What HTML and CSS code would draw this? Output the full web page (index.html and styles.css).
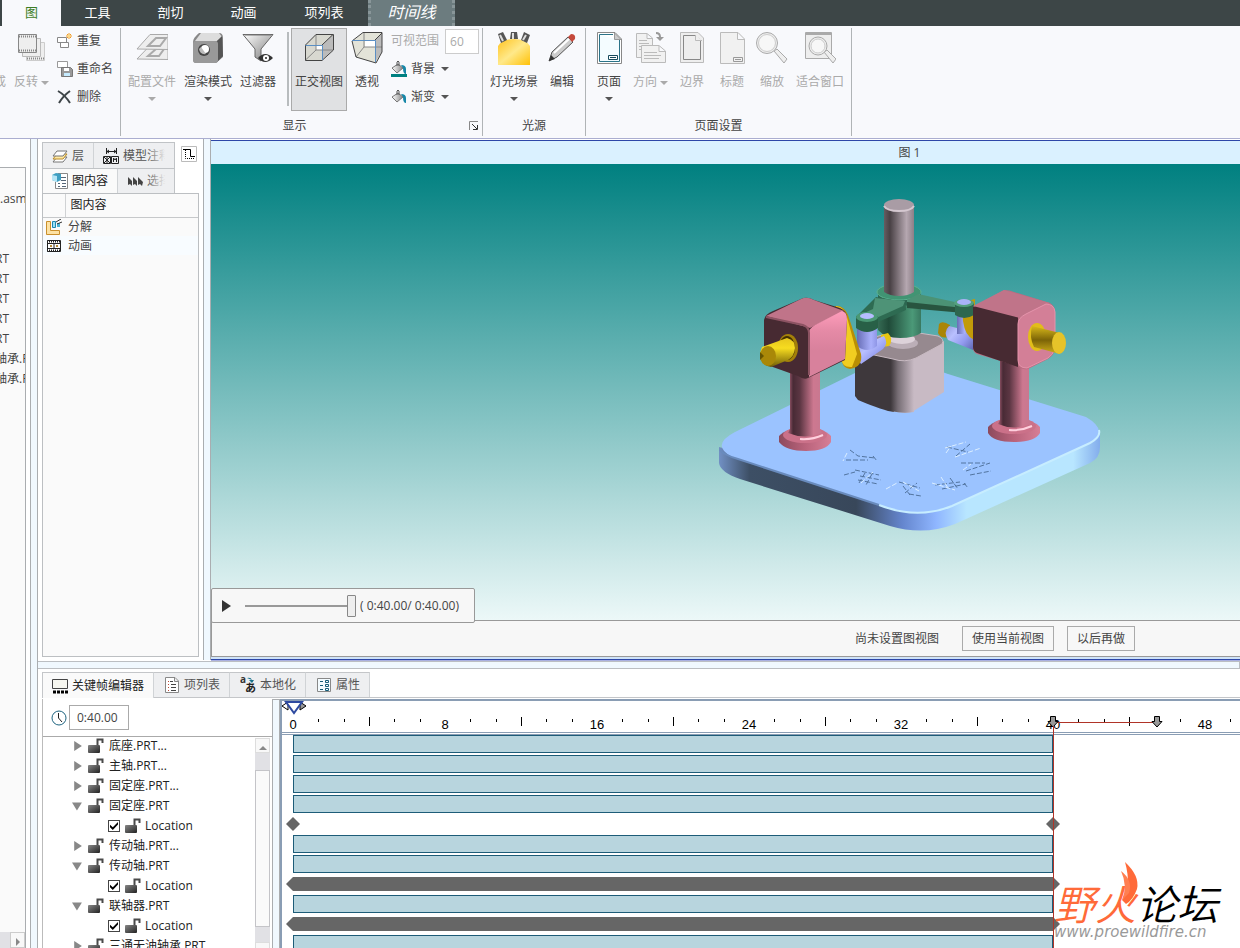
FILE: index.html
```html
<!DOCTYPE html>
<html lang="zh-CN">
<head>
    <meta charset="UTF-8">
    <meta name="viewport" content="width=device-width, initial-scale=1.0">
    <title>图 1</title>
    <link rel="stylesheet" href="styles.css">
</head>
<body>
    <!-- 公用图标 -->
    <svg class="defs" width="0" height="0">
        <defs>
            <linearGradient id="metal" x1="0" y1="0" x2="1" y2="1">
                <stop offset="0" stop-color="#fff"/><stop offset="1" stop-color="#777"/>
            </linearGradient>
            <linearGradient id="lockFill" x1="0" y1="0" x2="1" y2="1">
                <stop offset="0" stop-color="#888"/><stop offset="1" stop-color="#222"/>
            </linearGradient>
            <linearGradient id="bucket" x1="0" y1="0" x2="1" y2="0">
                <stop offset="0" stop-color="#fff"/><stop offset="1" stop-color="#888"/>
            </linearGradient>
            <symbol id="lock" viewBox="0 0 16 16">
                <path d="M9.500 8V1.500H14.500V5" fill="none" stroke="#4a4a4a" stroke-width="2"/>
                <rect x="0" y="7" width="12" height="8" rx="1" fill="url(#lockFill)"/>
            </symbol>
            <symbol id="bucketIcon" viewBox="0 0 16 16">
                <path d="M1 8L7 4L12 8L6 13Z" fill="url(#bucket)" stroke="#777"/>
                <path d="M6 6V2Q7 0 8 2V6" fill="none" stroke="#555"/>
                <path d="M10 5Q15 5 15 9V14Q12 14 12 8Z" fill="#1687a8"/>
            </symbol>
            <symbol id="ticks" viewBox="0 0 152 10">
                <path d="M25.500 2V5M51.500 2V5M101.500 2V5M127.500 2V5M76.500 0V9" stroke="#000" fill="none"/>
            </symbol>
            <symbol id="handle" viewBox="0 0 12 12">
                <path d="M3.500 .5H8.500V5.500H11L6 11L1 5.500H3.500Z" fill="#999" stroke="#000"/>
            </symbol>
        </defs>
    </svg>

    <nav class="menu">
        <a href="#" class="active">图</a>
        <a href="#">工具</a>
        <a href="#">剖切</a>
        <a href="#">动画</a>
        <a href="#" class="wide">项列表</a>
        <a href="#" class="context">时间线</a>
    </nav>

    <header class="ribbon">
        <section class="group group-edit">
            <div class="tools">
                <button class="tool disabled">
                    <svg width="24" height="32"></svg>
                    <span>生成</span>
                </button>
                <button class="tool disabled">
                    <svg width="32" height="32" viewBox="0 0 32 32" fill="#eee" stroke="#aaa">
                        <path d="M11.500 10.500H29.500V28.500H11.500Z" stroke="#ccc"/><path d="M7.500 6.500H25.500V24.500H7.500Z" stroke="#bbb"/>
                        <path d="M3.500 2.500H21.500V20.500H3.500Z" stroke="#888"/>
                        <path d="M4 4.500H21M4 18.500H21M12 26.500H29" stroke="#888" stroke-width="2" stroke-dasharray="1 1"/>
                    </svg>
                    <span>反转<i class="caret"></i></span>
                </button>
                <div class="stack">
                    <button class="small">
                        <svg width="16" height="16" viewBox="0 0 16 16">
                            <path d="M.5 4.500H9.500V9.500H.5ZM3.500 9.500H11.500V14.500H3.500Z" fill="#fff" stroke="#888"/>
                            <path d="M12 0V6M9 3H15M10 1L14 5M14 1L10 5" stroke="#f29a1f"/><circle cx="12" cy="3" r="1" fill="#fff2a0"/>
                        </svg>重复
                    </button>
                    <button class="small">
                        <svg width="16" height="16" viewBox="0 0 16 16">
                            <path d="M.5 .5H10.500V6.500H.5Z" fill="#fff" stroke="#999"/>
                            <path d="M4.500 6.500H13.500L15.500 8.500V15.500H4.500Z" fill="#999" stroke="#777"/>
                            <path d="M7 7H12V10H7Z" fill="#fff"/><path d="M7 12H13V15H7Z" fill="#c5ebff"/>
                        </svg>重命名
                    </button>
                    <button class="small">
                        <svg width="16" height="16" viewBox="0 0 16 16">
                            <path d="M1 2Q8 6 13 14M13 2Q6 7 2 14" fill="none" stroke="#3e4548" stroke-width="2"/>
                        </svg>删除
                    </button>
                </div>
            </div>
        </section>

        <section class="group">
            <div class="tools">
                <button class="tool disabled">
                    <svg width="32" height="32" viewBox="0 0 32 32" fill="#eee" stroke="#aaa">
                        <path d="M1 27L14 13.500H32V27.500Z"/><path d="M12 24L20 17H28L23 24Z" fill="none" stroke-width="2"/>
                        <path d="M1 17L14 2.500H32V17.500Z"/><path d="M12 14L20 6H30L24 14Z" fill="none" stroke-width="2"/>
                    </svg>
                    <span>配置文件</span><i class="caret"></i>
                </button>
                <button class="tool">
                    <svg width="32" height="32" viewBox="0 0 32 32">
                        <path d="M1 10Q1 6 7 1H27Q31 1 31 6V25L24 31H4Q1 31 1 27Z" fill="#888"/>
                        <path d="M3 9L9 1H27L30 5L25 9Z" fill="#ddd"/><path d="M25 9L30 4L31 24L25 30Z" fill="#555"/>
                        <rect x="1" y="9" width="25" height="22" rx="3" fill="#999"/>
                        <circle cx="12" cy="18" r="6" fill="#444"/><circle cx="13" cy="17" r="4" fill="#fff"/><path d="M7 17Q8 23 14 22L9 15Z" fill="#bbb"/>
                    </svg>
                    <span>渲染模式</span><i class="caret"></i>
                </button>
                <button class="tool">
                    <svg width="32" height="32" viewBox="0 0 32 32">
                        <path d="M1 2.500H31L19 17V29L13 25V17Z" fill="url(#metal)" stroke="#666"/><path d="M3 3H29" stroke="#777"/>
                        <path d="M16 26Q23 18 31 26Q23 34 16 26Z" fill="#333"/><circle cx="24" cy="26" r="3" fill="#fff"/><circle cx="24" cy="26" r="1" fill="#222"/>
                    </svg>
                    <span>过滤器</span>
                </button>
                <div class="divider"></div>
                <button class="tool pressed">
                    <svg width="32" height="32" viewBox="0 0 32 32">
                        <path d="M2 13L13 2H30V18L19 28H2Z" fill="#d8d8d0"/><path d="M19 13L30 2V18L19 28Z" fill="#bbb"/><path d="M13 13H19V18H13Z" fill="#fff"/>
                        <path d="M13 2.500V18H30M13 18L2.500 28" fill="none" stroke="#888"/>
                        <path d="M2.500 13V28.500H19L30.500 18V2.500H13L2.500 13M19 13L30 2.500" fill="none" stroke="#444"/>
                        <path d="M2.500 13.500H19.500V28" fill="none" stroke="#5b8fc4"/>
                    </svg>
                    <span>正交视图</span>
                </button>
                <button class="tool">
                    <svg width="32" height="32" viewBox="0 0 32 32">
                        <path d="M1 9L12 1H31V20L25 31L5 25Z" fill="#e3e3d8"/><path d="M24 8L31 1V20L24 30Z" fill="#bbb"/><path d="M14 8H24V15H14Z" fill="#fff"/>
                        <path d="M13 1V15H31M13 15L5 25" fill="none" stroke="#888"/>
                        <path d="M1 9L12 .5H31V20L25 31L5 25ZM24 8L31 1" fill="none" stroke="#444"/>
                        <path d="M1 8.500H24.500V30" fill="none" stroke="#5b8fc4"/>
                    </svg>
                    <span>透视</span>
                </button>
                <div class="stack">
                    <div class="field">
                        <label for="fov">可视范围</label>
                        <input type="text" id="fov" value="60" disabled>
                    </div>
                    <button class="small">
                        <svg width="16" height="16" viewBox="0 0 16 16"><use href="#bucketIcon" y="-1"/><path d="M0 13H16V16H0Z" fill="#008080"/></svg>背景<i class="caret"></i>
                    </button>
                    <button class="small">
                        <svg width="16" height="16"><use href="#bucketIcon"/></svg>渐变<i class="caret"></i>
                    </button>
                </div>
            </div>
            <div class="group-name with-launcher">显示
                <button class="launcher" aria-label="显示选项">
                    <svg width="10" height="10" viewBox="0 0 10 10"><path d="M.5 9V.5H9" fill="none" stroke="#888"/><path d="M3 3L8 8M8.500 4V8.500H4" fill="none" stroke="#333"/></svg>
                </button>
            </div>
        </section>

        <section class="group">
            <div class="tools">
                <button class="tool">
                    <svg width="34" height="34" viewBox="0 0 34 34">
                        <defs><linearGradient id="lamp" x1="0" y1="0" x2="1" y2="1"><stop offset="0" stop-color="#ffc320"/><stop offset=".5" stop-color="#ffe98a"/><stop offset="1" stop-color="#ffc107"/></linearGradient></defs>
                        <path d="M1 34V15Q5 8 17 8T33 15V34Z" fill="url(#lamp)"/>
                        <path d="M1 3L6 1L10 9L4 12ZM14 1H20L21 8H13ZM27 1L33 4L30 12L24 9Z" fill="#555"/>
                        <path d="M3 4L6 10M16 2V8M29 4L26 9" stroke="#ddd" stroke-width="2"/>
                    </svg>
                    <span>灯光场景</span><i class="caret"></i>
                </button>
                <button class="tool">
                    <svg width="32" height="32" viewBox="0 0 32 32">
                        <path d="M3 29L6 20L22 5L27 10L11 25Z" fill="#ccc" stroke="#555"/><path d="M8 21L23 7" stroke="#fff" stroke-width="2"/>
                        <path d="M3 29L5 23L9 27Z" fill="#333"/><path d="M22 5L25 2Q30 2 29 7L26 10Z" fill="#c5493b"/>
                    </svg>
                    <span>编辑</span>
                </button>
            </div>
            <div class="group-name">光源</div>
        </section>

        <section class="group">
            <div class="tools">
                <button class="tool">
                    <svg width="32" height="32" viewBox="0 0 32 32">
                        <path d="M4.500 .5H22L28.500 7V31.500H4.500Z" fill="#fff" stroke="#888"/><path d="M6.500 2.500H20M26.500 8V29.500H6.500V2.500" fill="#f4fcff" stroke="#2b7388"/>
                        <path d="M21.500 1V7.500H28Z" fill="#ccc" stroke="#999"/><path d="M15.500 23.500H24.500V27.500H15.500ZM17 25.500H23" fill="#fff" stroke="#174b5d"/>
                    </svg>
                    <span>页面</span><i class="caret"></i>
                </button>
                <button class="tool disabled">
                    <svg width="32" height="32" viewBox="0 0 32 32" fill="#f1f1f1" stroke="#bbb">
                        <path d="M1.500 1.500H12L17.500 6V25.500H1.500ZM12 2V6.500H17M4 8.500H12M4 11.500H14M4 14.500H12M4 17.500H8"/>
                        <path d="M6.500 13.500H24L30.500 19V30.500H6.500ZM24 14V19.500H30M9 20.500H22M9 23.500H26M9 26.500H24"/>
                        <path d="M21 1Q25 1 25 5" fill="none" stroke="#999" stroke-width="2"/><path d="M21 5H29L25 9Z" fill="#999" stroke="none"/>
                    </svg>
                    <span>方向<i class="caret"></i></span>
                </button>
                <button class="tool disabled">
                    <svg width="32" height="32" viewBox="0 0 32 32" fill="#eee" stroke="#bbb">
                        <path d="M4.500 .5H22L27.500 6V30.500H4.500Z"/><path d="M7.500 3.500H19L24.500 8V27.500H7.500Z" stroke="#888"/><path d="M19.500 3V8.500H26"/>
                    </svg>
                    <span>边界</span>
                </button>
                <button class="tool disabled">
                    <svg width="32" height="32" viewBox="0 0 32 32" fill="#f1f1f1" stroke="#bbb">
                        <path d="M4.500 .5H22L28.500 7V31.500H4.500ZM21.500 1V7.500H28"/><path d="M17.500 25.500H26.500V29.500H17.500ZM19 27.500H25" stroke="#999"/>
                    </svg>
                    <span>标题</span>
                </button>
                <button class="tool disabled">
                    <svg width="32" height="32" viewBox="0 0 32 32" fill="#eee" stroke="#aaa">
                        <path d="M18 19L21 17L31 27L28 31Z"/><circle cx="11" cy="11" r="10.500"/><circle cx="11" cy="11" r="8.500" fill="#f7f7f7" stroke="#ccc"/>
                    </svg>
                    <span>缩放</span>
                </button>
                <button class="tool disabled">
                    <svg width="32" height="32" viewBox="0 0 32 32" fill="#eee" stroke="#aaa">
                        <path d="M1.500 .5H27.500V26.500H1.500Z"/><path d="M1 2H28" stroke-width="2"/><path d="M20 20L23 18L32 27L29 31Z"/><circle cx="14" cy="14" r="9"/><circle cx="14" cy="14" r="7" fill="#f7f7f7" stroke="#ccc"/>
                    </svg>
                    <span>适合窗口</span>
                </button>
            </div>
            <div class="group-name">页面设置</div>
        </section>
    </header>

    <div class="workspace">
        <aside class="model-tree">
            <div class="model-box">
                <ul>
                    <li class="root">.asm</li>
                    <li></li>
                    <li></li>
                    <li>RT</li>
                    <li>RT</li>
                    <li>RT</li>
                    <li>RT</li>
                    <li>RT</li>
                    <li>轴承.PRT</li>
                    <li>轴承.PRT</li>
                </ul>
                <div class="hscroll"><button aria-label="向右"><i class="arrow-right"></i></button></div>
            </div>
        </aside>
        <div class="splitter-v"></div>

        <main class="main">
            <div class="upper">
                <aside class="figure-tree">
                    <div class="tree-head">
                        <div class="tree-tabs">
                            <div class="tab-row">
                                <button class="tab tab-layer">
                                    <svg width="16" height="16" viewBox="0 0 16 16"><path d="M1 14L5 9H15L11 14Z" fill="#fff" stroke="#777"/><path d="M1 11L5 6H15L11 11Z" fill="#ffe9a3" stroke="#b98a28"/><path d="M1 8L5 3H15L11 8Z" fill="#fff" stroke="#777"/></svg>层
                                </button>
                                <button class="tab fade">
                                    <svg width="16" height="16" viewBox="0 0 16 16"><path d="M3.500 0V6M13.500 0V6M4 3.500H13M6 2L4 3.500L6 5M11 2L13 3.500L11 5" fill="none" stroke="#222"/><path d="M.5 8.500H7.500V15.500H.5ZM8.500 8.500H15.500V15.500H8.500ZM1 9L7 15M7 9L1 15M4 9V15M10.500 14V10L12 12L13.500 10V14" fill="none" stroke="#222"/></svg>模型注释
                                </button>
                            </div>
                            <div class="tab-row">
                                <button class="tab tab-figure active">
                                    <svg width="16" height="16" viewBox="0 0 16 16"><path d="M5.500 .5H15.500V15.500H3.500V9" fill="#fff" stroke="#888"/><path d="M9 4.500H14M9 7.500H14M6 10.500H8M10 10.500H14M6 13.500H8M10 13.500H14" stroke="#567"/><path d="M0 2L4 0L9 1V7L5 9L0 7Z" fill="#3f9fc2"/><path d="M0 2L5 3V9L0 7Z" fill="#b6e5f5"/></svg>图内容
                                </button>
                                <button class="tab fade">
                                    <svg width="16" height="16" viewBox="0 0 16 16"><path d="M1 4L5 8V13L3 11L1 12ZM6 4L10 8V13L8 11L6 12ZM11 4L16 9L15 13L13 11L11 12Z" fill="#444"/></svg>选择
                                </button>
                            </div>
                        </div>
                        <button class="tree-menu" aria-label="树设置">
                            <svg width="16" height="16" viewBox="0 0 16 16"><path d="M.5 .5H15.500V15.500H.5Z" fill="#fff" stroke="#bbb"/><path d="M2 3.500H9.500V10.500H14" fill="none" stroke="#000"/><path d="M4.500 4V12.500H14" fill="none" stroke="#000" stroke-dasharray="1 1"/></svg>
                        </button>
                    </div>
                    <div class="figure-box">
                        <table>
                            <thead>
                                <tr><th></th><th>图内容</th></tr>
                            </thead>
                            <tbody>
                                <tr>
                                    <td><svg width="16" height="16" viewBox="0 0 16 16"><path d="M.5 2.500H4.500V11.500H13.500V15.500H.5Z" fill="#fde2a4" stroke="#c98f2c"/><path d="M6.500 2.500H9.500V8.500H6.500Z" fill="#9be0f5" stroke="#1d87b0"/><path d="M11 4H14V8H11Z" fill="#48b2d4"/><path d="M10 3L15 0M11 5L16 3" stroke="#333"/></svg></td>
                                    <td>分解</td>
                                </tr>
                                <tr class="current">
                                    <td><svg width="16" height="16" viewBox="0 0 16 16"><path d="M1.500 2.500H14.500V13.500H1.500Z" fill="#fff" stroke="#222"/><path d="M1 3.500H15M1 12.500H15" stroke="#222" stroke-width="2" stroke-dasharray="1 1"/><path d="M2 5.500H14M2 10.500H14M8 5V11" stroke="#222"/><path d="M4 7H6V9H4ZM10 7H12V9H10Z" fill="#b58a35"/></svg></td>
                                    <td>动画</td>
                                </tr>
                            </tbody>
                        </table>
                    </div>
                </aside>
                <div class="splitter-v"></div>

                <section class="viewer">
                    <h1>图 1</h1>
                    <div class="canvas">
                        <svg class="model" width="400" height="360" viewBox="710 190 400 360">
                            <defs>
                                <linearGradient id="side" gradientUnits="userSpaceOnUse" x1="719" y1="0" x2="1100" y2="0">
                                    <stop offset="0" stop-color="#7190c4"/><stop offset=".08" stop-color="#3d4f65"/><stop offset=".36" stop-color="#38475a"/><stop offset=".48" stop-color="#6485cd"/><stop offset=".57" stop-color="#8fb6ff"/><stop offset=".65" stop-color="#b8e6ff"/><stop offset=".93" stop-color="#b8e6ff"/><stop offset="1" stop-color="#83adec"/>
                                </linearGradient>
                                <linearGradient id="pink"><stop offset="0" stop-color="#ae637a"/><stop offset=".15" stop-color="#482a35"/><stop offset=".35" stop-color="#5c3643"/><stop offset=".75" stop-color="#cd7890"/><stop offset="1" stop-color="#c77890"/></linearGradient>
                                <linearGradient id="flange"><stop offset="0" stop-color="#8d4a5d"/><stop offset=".5" stop-color="#b9637b"/><stop offset="1" stop-color="#d67e96"/></linearGradient>
                                <linearGradient id="grey"><stop offset="0" stop-color="#665d61"/><stop offset=".2" stop-color="#494145"/><stop offset=".75" stop-color="#b5a7b0"/><stop offset="1" stop-color="#8c7f87"/></linearGradient>
                                <linearGradient id="green"><stop offset="0" stop-color="#356a53"/><stop offset=".25" stop-color="#204b39"/><stop offset=".8" stop-color="#4b9978"/><stop offset="1" stop-color="#397860"/></linearGradient>
                                <linearGradient id="violet" x1="0" y1="0" x2="1" y2="1"><stop offset="0" stop-color="#8288cc"/><stop offset=".4" stop-color="#b9c0ff"/><stop offset=".7" stop-color="#929aef"/><stop offset="1" stop-color="#6068b2"/></linearGradient>
                                <linearGradient id="violetPost"><stop offset="0" stop-color="#676db5"/><stop offset=".7" stop-color="#a9b0fb"/><stop offset="1" stop-color="#8f96e6"/></linearGradient>
                                <linearGradient id="yellow" x1="0" y1="0" x2="0" y2="1"><stop offset="0" stop-color="#e6c51d"/><stop offset=".35" stop-color="#f7dc20"/><stop offset="1" stop-color="#715e06"/></linearGradient>
                                <linearGradient id="yellowDark" x1="0" y1="0" x2="0" y2="1"><stop offset="0" stop-color="#d9b91a"/><stop offset=".5" stop-color="#7c6407"/><stop offset="1" stop-color="#d2b01a"/></linearGradient>
                                <linearGradient id="corner" gradientUnits="userSpaceOnUse" x1="891" y1="0" x2="914" y2="0"><stop offset="0" stop-color="#403a3e"/><stop offset=".3" stop-color="#766d74"/><stop offset="1" stop-color="#c8bac4"/></linearGradient>
                                <linearGradient id="pinkFace" x1="0" y1="0" x2="0" y2="1"><stop offset="0" stop-color="#ff9dbb"/><stop offset=".3" stop-color="#e58aa6"/><stop offset=".6" stop-color="#d8819c"/></linearGradient>
                            </defs>
                            <!-- 底座 -->
                            <path d="M719 447V463Q720 472 740 479L890 526Q924 536 955 524L1090 463Q1100 458 1100 447V431L918 500Z" fill="url(#side)"/>
                            <path d="M735 432Q710 445 732 457L879 505Q917 520 952 506L1090 443Q1110 431 1086 417L948 374Q900 355 855 373Z" fill="#9bc3ff"/>
                            <path d="M879 505Q917 520 952 506L1090 443Q1101 437 1099 430" fill="none" stroke="#c7edff" stroke-width="2"/>
                            <path d="M720 450Q724 455 738 459L879 505" fill="none" stroke="#698bbd" stroke-width="2"/>
                            <g fill="none" stroke="#52749f" stroke-dasharray="5 2">
                                <path d="M850 450L858 456L875 458M846 460H868M873 456L877 461M844 475L855 472M858 480L878 484M860 476L881 480M865 473L859 483M872 474L866 485M855 470L879 475M899 482L920 488M905 493L917 483M903 486L910 495M909 494L921 496"/>
                                <path d="M935 485L960 482M942 489L966 484M950 478L958 489M964 483L968 488M947 447L968 452M956 456L970 444M961 463H985M966 471L990 463M970 475L991 471"/>
                            </g>
                            <g fill="none" stroke="#dcefff" stroke-dasharray="5 2">
                                <path d="M847 453L843 461M861 483L873 472M886 489L897 483M903 482L919 491M932 483L955 490M941 477L948 488M945 448L966 442M946 453L951 446M955 457L981 448M963 470L971 464"/>
                            </g>
                            <!-- 中间基座和主轴 -->
                            <path d="M855 349L894 358V412Q884 411 858 400L855 396Z" fill="#3e383c"/>
                            <path d="M911 358L944 341V392L912 412Q903 414 892 411V356Z" fill="#c8bac4"/>
                            <path d="M891 356H914V412Q903 414 891 411Z" fill="url(#corner)"/>
                            <path d="M856 349Q858 343 868 339L900 330L938 336Q945 339 942 344L916 358Q905 363 893 359L860 352Z" fill="#96898f" stroke="#c8bac2"/>
                            <ellipse cx="903" cy="343" rx="15" ry="6" fill="#bbaeb7"/><ellipse cx="902" cy="339" rx="13" ry="5" fill="#ddd2da"/>
                            <path d="M878 294H921V333Q914 338 900 338Q885 338 878 330Z" fill="url(#green)"/>
                            <path d="M878 292H921V298Q916 306 900 306T878 298Z" fill="#2c6650"/>
                            <ellipse cx="899" cy="292" rx="22" ry="8" fill="#419473" stroke="#5bb391"/>
                            <path d="M884 205H914V292Q908 296 899 296T884 292Z" fill="url(#grey)"/>
                            <ellipse cx="899" cy="205" rx="15" ry="6" fill="#a99ca5"/><path d="M884 206Q887 211 899 211T914 206" fill="none" stroke="#d5c8d0" stroke-width="2"/>
                            <path d="M918 294L964 304V312L907 305V300Z" fill="#4b9275"/><path d="M907 302L964 308V313L907 308Z" fill="#28543f"/>
                            <!-- 右侧连接 -->
                            <path d="M939 324Q942 320 950 325L948 337Q941 339 938 333Z" fill="#aa8507"/>
                            <path d="M949 326L957 328V318H968V332L973 334V350L948 340Q943 332 949 326Z" fill="url(#violet)"/><path d="M957 315H968V334H957Z" fill="url(#violetPost)"/>
                            <path d="M975 299Q961 301 963 321Q965 336 974 340Z" fill="#c29b09"/>
                            <path d="M955 303H974V315Q964 321 955 315Z" fill="#2d674f"/><ellipse cx="964" cy="303" rx="10" ry="4" fill="#54a17f"/><ellipse cx="964" cy="302" rx="7" ry="3" fill="#a8b3fa"/>
                            <!-- 左侧连接 -->
                            <path d="M881 335L888 333Q894 339 889 346L882 347Z" fill="#e7c612"/>
                            <path d="M857 341L877 339L884 336Q889 343 883 349L861 364Q853 354 857 341Z" fill="url(#violet)"/><path d="M857 327H877V346Q867 354 857 346Z" fill="url(#violetPost)"/>
                            <path d="M876 297L904 302Q906 305 906 310L878 322L858 325V315Z" fill="#2e6b52"/><path d="M875 298L905 301L903 306L874 319L860 315L873 309Z" fill="#4e9377"/>
                            <path d="M856 316H878V328Q867 336 856 328Z" fill="#286047"/><ellipse cx="867" cy="317" rx="11" ry="5" fill="#4a9875"/><ellipse cx="867" cy="316" rx="7" ry="3" fill="#b5bdff"/>
                            <!-- 固定座 -->
                            <g>
                                <path d="M779 436Q786 428 805 428T831 436V442Q826 451 806 451T779 442Z" fill="url(#flange)"/><ellipse cx="805" cy="435" rx="22" ry="8" fill="#cb7189"/>
                                <path d="M790 370H820V429L822 433Q805 440 788 433L790 429Z" fill="url(#pink)"/><path d="M800 439Q812 440 823 435" fill="none" stroke="#ffd0de" stroke-width="2"/>
                                <path d="M835 306Q844 305 848 315L861 354Q863 367 850 369Q842 368 841 358Z" fill="#b98f04"/><path d="M836 306Q845 307 847 317L857 354L852 367Q842 368 841 358Z" fill="#f1cd20"/>
                                <path d="M764 320Q765 314 773 311L801 299Q807 296 814 300L840 308Q847 311 847 318L845 360L808 378Q804 380 798 376L770 366Q764 363 764 358Z" fill="#472a32"/>
                                <path d="M766 316L801 299Q807 296 814 300L844 311L810 328Z" fill="#c07489"/><path d="M809 331Q811 327 817 324L842 311Q847 312 847 319L845 359L809 377Z" fill="url(#pinkFace)"/>
                                <path d="M766 317L803 325Q809 327 809 333V375" fill="none" stroke="#8c5362" stroke-width="2"/>
                                <ellipse cx="788" cy="348" rx="10" ry="14" fill="#a48009"/><ellipse cx="787" cy="348" rx="8" ry="12" fill="#443000"/>
                                <path d="M762 347L787 338Q795 340 795 348Q794 357 788 360L771 367Q761 366 760 353Z" fill="url(#yellow)"/><ellipse cx="768" cy="356" rx="8" ry="10" fill="#a98808"/><path d="M760 352L764 356L760 360" fill="#675500"/>
                            </g>
                            <g>
                                <path d="M988 427Q995 419 1014 419T1040 427V433Q1035 442 1014 442T988 433Z" fill="url(#flange)"/><ellipse cx="1014" cy="426" rx="22" ry="8" fill="#cb7189"/>
                                <path d="M1000 360H1029V420L1031 424Q1014 431 998 424L1000 420Z" fill="url(#pink)"/><path d="M1009 430Q1021 431 1032 426" fill="none" stroke="#ffd0de" stroke-width="2"/>
                                <path d="M973 307L1004 290Q1010 290 1014 292L1050 303Q1055 306 1055 312V350Q1053 356 1048 359L1028 369Q1022 370 1018 366L977 354Q973 352 973 348Z" fill="#bd6c82"/>
                                <path d="M973 307Q980 304 990 308L1018 317V367L977 353Q973 351 973 347Z" fill="#472a32"/><path d="M973 306L1004 290L1050 303L1020 318Z" fill="#c07489"/>
                                <path d="M1018 324Q1018 318 1026 314L1046 304Q1054 304 1055 312V348Q1053 355 1048 358L1027 368Q1018 368 1018 360Z" fill="#d37f97" stroke="#e594ab"/>
                                <ellipse cx="1037" cy="337" rx="9" ry="14" fill="#e2bd19"/><path d="M1032 326L1060 333V354L1034 347Q1029 337 1032 326Z" fill="url(#yellowDark)"/><ellipse cx="1059" cy="343" rx="7" ry="11" fill="#e6c329"/>
                            </g>
                        </svg>
                        <div class="playbar">
                            <button class="play" aria-label="播放"><svg width="9" height="12" viewBox="0 0 9 12"><path d="M0 0L9 6L0 12Z" fill="#333"/></svg></button>
                            <input type="range" aria-label="播放位置" min="0" max="40" value="40">
                            <span>( 0:40.00/ 0:40.00)</span>
                        </div>
                    </div>
                    <div class="view-status">
                        <span>尚未设置图视图</span>
                        <button>使用当前视图</button>
                        <button>以后再做</button>
                    </div>
                </section>
            </div>
            <div class="splitter-h"></div>

            <section class="dock">
                <div class="dock-tabs">
                    <button class="tab active">
                        <svg width="16" height="16" viewBox="0 0 16 16"><path d="M.5 1.500H15.500V10.500H.5Z" fill="#f7f7f0" stroke="#444"/><path d="M1 14H16" stroke="#000" stroke-width="3" stroke-dasharray="3 1"/></svg>关键帧编辑器
                    </button>
                    <button class="tab">
                        <svg width="16" height="16" viewBox="0 0 16 16"><path d="M1.500 .5H11L14.500 4V15.500H1.500ZM10.500 1V4.500H14" fill="#fff" stroke="#888"/><path d="M6 4.500H9M7 7.500H12M7 10.500H12M7 13.500H12" stroke="#444"/><path d="M4 4.500H5M4 7.500H5M4 10.500H5M4 13.500H5" stroke="#c04a35"/></svg>项列表
                    </button>
                    <button class="tab">
                        <svg width="16" height="16" viewBox="0 0 16 16"><text x="0" y="6" font-size="10" font-weight="bold" fill="#333">a</text><text x="5" y="15" font-size="11" font-weight="bold" fill="#222">あ</text><path d="M7 1Q11 0 12 3M9 3H14L12 6Z" fill="#16718c"/></svg>本地化
                    </button>
                    <button class="tab">
                        <svg width="16" height="16" viewBox="0 0 16 16"><path d="M1.500 1.500H14.500V14.500H1.500Z" fill="#f3fbff" stroke="#888"/><path d="M9.500 3.500H12.500V5.500H9.500ZM9.500 7.500H12.500V9.500H9.500ZM9.500 11.500H12.500V13.500H9.500ZM4 4.500H7M4 8.500H7M4 12.500H7" fill="none" stroke="#155d78"/></svg>属性
                    </button>
                </div>
                <div class="dock-body">
                    <div class="keys">
                        <div class="time">
                            <label for="time"><svg width="16" height="16" viewBox="0 0 16 16"><title>时间</title><circle cx="8" cy="8" r="7" fill="#fff" stroke="#1e6480"/><path d="M7.500 3V8L11 12" fill="none" stroke="#222"/></svg></label>
                            <input type="text" id="time" value="0:40.00">
                        </div>
                        <div class="key-box">
                            <ul class="key-list">
                                <li><i class="closed"></i><svg width="16" height="16"><use href="#lock"/></svg>底座.PRT...</li>
                                <li><i class="closed"></i><svg width="16" height="16"><use href="#lock"/></svg>主轴.PRT...</li>
                                <li><i class="closed"></i><svg width="16" height="16"><use href="#lock"/></svg>固定座.PRT...</li>
                                <li><i class="open"></i><svg width="16" height="16"><use href="#lock"/></svg>固定座.PRT</li>
                                <li class="child"><input type="checkbox" id="loc1" checked><label for="loc1"><svg width="16" height="16"><use href="#lock"/></svg>Location</label></li>
                                <li><i class="closed"></i><svg width="16" height="16"><use href="#lock"/></svg>传动轴.PRT...</li>
                                <li><i class="open"></i><svg width="16" height="16"><use href="#lock"/></svg>传动轴.PRT</li>
                                <li class="child"><input type="checkbox" id="loc2" checked><label for="loc2"><svg width="16" height="16"><use href="#lock"/></svg>Location</label></li>
                                <li><i class="open"></i><svg width="16" height="16"><use href="#lock"/></svg>联轴器.PRT</li>
                                <li class="child"><input type="checkbox" id="loc3" checked><label for="loc3"><svg width="16" height="16"><use href="#lock"/></svg>Location</label></li>
                                <li><i class="closed"></i><svg width="16" height="16"><use href="#lock"/></svg>三通无油轴承.PRT</li>
                            </ul>
                            <div class="vscroll">
                                <button aria-label="向上"><i class="arrow-up"></i></button>
                                <div class="thumb"></div>
                                <button aria-label="向下"><i class="arrow-down"></i></button>
                            </div>
                        </div>
                    </div>
                    <div class="splitter-v dock-splitter"></div>

                    <div class="timeline">
                        <div class="ruler">
                            <div class="mark"><span>0</span><svg><use href="#ticks"/></svg></div>
                            <div class="mark"><span>8</span><svg><use href="#ticks"/></svg></div>
                            <div class="mark"><span>16</span><svg><use href="#ticks"/></svg></div>
                            <div class="mark"><span>24</span><svg><use href="#ticks"/></svg></div>
                            <div class="mark"><span>32</span><svg><use href="#ticks"/></svg></div>
                            <div class="mark"><span>40</span><svg><use href="#ticks"/></svg></div>
                            <div class="mark"><span>48</span><svg><use href="#ticks"/></svg></div>
                        </div>
                        <div class="tracks">
                            <div class="track"><div class="bar"></div></div>
                            <div class="track"><div class="bar"></div></div>
                            <div class="track"><div class="bar"></div></div>
                            <div class="track"><div class="bar"></div></div>
                            <div class="track"><div class="keyframes"><i></i><i></i></div></div>
                            <div class="track"><div class="bar"></div></div>
                            <div class="track"><div class="bar"></div></div>
                            <div class="track"><div class="span"></div></div>
                            <div class="track"><div class="bar"></div></div>
                            <div class="track"><div class="span"></div></div>
                            <div class="track"><div class="bar"></div></div>
                        </div>
                        <svg class="start" width="24" height="14" viewBox="0 0 24 14"><path d="M6 1L0 5L6 9Z" fill="#fff" stroke="#000"/><path d="M18 1L24 5L18 9Z" fill="#999" stroke="#000"/><path d="M4 1H20L12 12Z" fill="#fff" stroke="#2e4aa0" stroke-width="2"/></svg>
                        <div class="range"><svg width="12" height="12"><use href="#handle"/></svg><svg width="12" height="12"><use href="#handle"/></svg></div>
                        <div class="playhead"></div>
                        <div class="watermark">
                            <div class="brand"><em>野火</em>论坛</div>
                            <a href="#">www.proewildfire.cn</a>
                            <svg width="20" height="44" viewBox="0 0 20 44"><path d="M5 0Q20 14 17 27Q13 38 6 42L2 38Q12 25 5 0Z" fill="#ff6a39"/><path d="M1 9Q13 18 9 31L2 38Q8 24 1 9Z" fill="#ff7f50"/></svg>
                        </div>
                    </div>
                </div>
            </section>
        </main>
    </div>
</body>
</html>
```
FILE: styles.css
```css
* {
    box-sizing: border-box;
}
body {
    margin: 0;
    height: 100vh;
    display: flex;
    flex-direction: column;
    overflow: hidden;
    font-family: "Open Sans", "Noto Sans CJK SC", sans-serif;
    font-size: 12px;
    line-height: 18px;
    color: #444;
    background: #fff;
}
button, input {
    font: inherit;
    color: inherit;
    margin: 0;
    padding: 0;
    border: none;
    background: none;
}
svg {
    flex: none;
    display: block;
}
ul {
    list-style: none;
    margin: 0;
    padding: 0;
}
.defs {
    position: absolute;
}

/* 菜单 */
.menu {
    flex: none;
    display: flex;
    height: 26px;
    padding-left: 2px;
    background: #3d4647;
    font-size: 13px;
    line-height: 24px;
}
.menu a {
    width: 73px;
    text-align: center;
    color: #fff;
    text-decoration: none;
}
.menu a.active {
    width: 59px;
    color: #3d7d25;
    background: #f8f9fc;
}
.menu a.wide {
    width: 88px;
}
.menu a.context {
    width: 87px;
    font-size: 16px;
    font-style: italic;
    background: #6c7c7f;
    border-left: 3px dotted #899699;
    border-right: 3px dotted #899699;
}

/* 功能区 */
.ribbon {
    flex: none;
    display: flex;
    height: 113px;
    padding: 2px 0;
    background: #f8f9fc;
    border-bottom: 1px solid #abaed0;
}
.group {
    display: flex;
    flex-direction: column;
    justify-content: space-between;
    padding: 0 3px;
    border-right: 1px solid #b0b4b6;
}
.group-edit {
    width: 121px;
    padding-right: 7px;
}
.group-edit .tools {
    justify-content: flex-end;
}
.tools {
    display: flex;
}
.tool {
    flex: none;
    display: flex;
    flex-direction: column;
    align-items: center;
    height: 83px;
    min-width: 40px;
    padding: 4px 4px 0;
    white-space: nowrap;
}
.group-edit .tool {
    min-width: 0;
}
.tool svg {
    height: 34px;
    margin-top: -1px;
}
.tool > span {
    margin-top: 8px;
}
.tool > .caret {
    margin-top: 6px;
}
.tool span .caret {
    margin-left: 3px;
}
.tool.disabled {
    color: #aaa;
}
.tool.pressed {
    padding: 3px 3px 0;
    background: #e0e1e3;
    border: 1px solid #aaa;
}
.caret {
    display: inline-block;
    border: 4px solid transparent;
    border-top-color: #555;
    border-bottom: none;
    vertical-align: middle;
}
.disabled .caret {
    border-top-color: #aaa;
}
.divider {
    width: 2px;
    height: 74px;
    margin: 4px 2px 0 7px;
    background: #b8bcbe;
}
.stack {
    display: flex;
    flex-direction: column;
    margin-top: -1px;
    padding-left: 4px;
}
.small, .field {
    display: flex;
    align-items: center;
    gap: 4px;
    height: 28px;
    white-space: nowrap;
}
.small .caret {
    margin-left: 2px;
}
.field {
    gap: 6px;
    color: #aaa;
}
.field input {
    width: 34px;
    height: 25px;
    padding-left: 4px;
    border: 1px solid #ccc;
    background: #fff;
}
.group-name {
    position: relative;
    line-height: 16px;
    padding-bottom: 2px;
    text-align: center;
}
.with-launcher {
    padding-right: 14px;
}
.launcher {
    position: absolute;
    right: 0;
    top: 3px;
}

/* 工作区 */
.workspace {
    flex: 1;
    display: flex;
    min-height: 0;
}
.splitter-v {
    flex: none;
    width: 8px;
    background: #f0f8fe;
    border: 1px solid #aaadb0;
    border-width: 0 1px;
}
.splitter-h {
    flex: none;
    height: 8px;
    margin-top: 1px;
    background: #f0f8fe;
    border: 1px solid #bbbec2;
    border-left: none;
}
.model-tree {
    flex: none;
    width: 30px;
    padding: 28px 4px 0 0;
}
.model-box {
    display: flex;
    flex-direction: column;
    justify-content: space-between;
    height: 100%;
    padding-top: 21px;
    border: 1px solid #aaadb0;
    border-width: 1px 1px 0 0;
    background: #fafafa;
    overflow: hidden;
}
.model-box li {
    height: 20px;
    line-height: 20px;
    text-indent: -5px;
    white-space: nowrap;
}
.model-box li.root {
    text-indent: 0;
}
.hscroll {
    display: flex;
    justify-content: flex-end;
    height: 16px;
    background: #e1e1e5;
}
.hscroll button {
    width: 15px;
    border: 1px solid #ccc;
    background: #f8f8f8;
}
.arrow-right {
    display: inline-block;
    border: 4px solid transparent;
    border-left-color: #888;
    border-right: none;
}
.main {
    flex: 1;
    display: flex;
    flex-direction: column;
    min-width: 0;
}
.upper {
    flex: 1;
    display: flex;
    min-height: 0;
}

/* 选项卡 */
.tab {
    position: relative;
    display: flex;
    align-items: center;
    gap: 4px;
    padding: 0 9px;
    color: #555;
    background: #eeeff1;
    border-right: 1px solid #d0d3d6;
    white-space: nowrap;
    overflow: hidden;
}
.tab.active {
    color: #222;
    background: #fafafa;
}
.figure-tree {
    flex: none;
    width: 165px;
    display: flex;
    flex-direction: column;
    padding: 3px 4px;
}
.tree-head {
    display: flex;
    justify-content: space-between;
}
.tree-tabs {
    width: 133px;
    border: 1px solid #c0c3c6;
    border-bottom: none;
}
.tab-row {
    display: flex;
    height: 25px;
}
.tab-row + .tab-row {
    border-top: 1px solid #c0c3c6;
}
.tab-row .fade {
    flex: 1;
    border-right: none;
}
.tab-row .fade::after {
    content: "";
    position: absolute;
    right: 0;
    top: 0;
    bottom: 0;
    width: 28px;
    background: linear-gradient(to right, #eeeff100, #eeeff1 70%);
}
.tab-layer {
    width: 51px;
}
.tab-figure {
    width: 75px;
}
.tree-menu {
    align-self: flex-start;
    margin: 4px 2px 0 0;
}
.figure-box {
    flex: 1;
    border: 1px solid #bcbfc2;
    background: #fafafa;
}
.figure-box table {
    width: 100%;
    border-collapse: collapse;
    table-layout: fixed;
}
.figure-box th, .figure-box td {
    height: 19px;
    padding: 0 0 0 3px;
    text-align: left;
    font-weight: normal;
    line-height: 18px;
}
.figure-box th {
    height: 23px;
    padding-left: 5px;
    border-bottom: 1px solid #c6c8ca;
    color: #222;
}
.figure-box th:first-child {
    width: 22px;
    border-right: 1px solid #d0d2d4;
}
.figure-box .current {
    background: #f8fcff;
}

/* 图形窗口 */
.viewer {
    flex: 1;
    display: flex;
    flex-direction: column;
    min-width: 0;
    border-top: 1px solid #2d47a8;
    border-bottom: 1px solid #2d47a8;
    box-shadow: 0 1px #a9afe0;
    background: #cfe3f8;
    padding-bottom: 2px;
    margin-top: 1px;
}
.viewer h1 {
    flex: none;
    margin: 0;
    height: 23px;
    padding-left: 368px;
    text-align: center;
    font-size: 12px;
    font-weight: normal;
    line-height: 23px;
    background: #daf1ff;
}
.canvas {
    position: relative;
    flex: 1;
    display: flex;
    justify-content: center;
    padding: 26px 0 0 368px;
    background: linear-gradient(#008080, #ecf8f8);
}
.playbar {
    position: absolute;
    left: 0;
    bottom: -3px;
    display: flex;
    align-items: center;
    width: 264px;
    height: 35px;
    padding-left: 10px;
    background: #f7f7f7;
    border: 1px solid #999;
    border-radius: 2px;
}
.playbar input {
    appearance: none;
    width: 111px;
    height: 21px;
    margin: 0 4px 0 14px;
    background: linear-gradient(#999, #999) center / 100% 2px no-repeat;
}
.playbar input::-webkit-slider-thumb {
    appearance: none;
    width: 9px;
    height: 22px;
    border: 1px solid #888;
    border-radius: 1px;
    background: #eee;
}
.view-status {
    flex: none;
    display: flex;
    align-items: center;
    justify-content: flex-end;
    height: 37px;
    padding-right: 105px;
    background: #f7f7f7;
    border: 1px solid #999;
    border-right: none;
}
.view-status span {
    margin-right: 10px;
}
.view-status button {
    height: 25px;
    margin-left: 13px;
    padding: 0 9px;
    border: 1px solid #aaa;
}

/* 关键帧编辑器 */
.dock {
    flex: none;
    height: 279px;
    display: flex;
    flex-direction: column;
    padding: 3px 0 0 4px;
}
.dock-tabs {
    display: flex;
    height: 26px;
    border-bottom: 1px solid #c4c6c9;
}
.dock-tabs .tab {
    padding-left: 10px;
    border-top: 1px solid #c4c6c9;
}
.dock-tabs .active {
    height: 26px;
    padding-left: 9px;
    border-left: 1px solid #c4c6c9;
}
.dock-body {
    flex: 1;
    display: flex;
    min-height: 0;
    padding-top: 1px;
}
.keys {
    flex: none;
    width: 230px;
    display: flex;
    flex-direction: column;
    border-left: 1px solid #bbb;
}
.time {
    flex: none;
    display: flex;
    align-items: center;
    gap: 2px;
    height: 37px;
    padding-left: 8px;
}
.time input {
    width: 60px;
    height: 25px;
    padding-left: 7px;
    border: 1px solid #aaa;
    background: #fff;
}
.key-box {
    flex: 1;
    display: flex;
    min-height: 0;
    border-top: 1px solid #aaa;
}
.key-list {
    flex: 1;
    margin-top: -1px;
    color: #222;
    overflow: hidden;
}
.key-list li {
    display: flex;
    align-items: center;
    gap: 5px;
    height: 20px;
    padding-left: 29px;
    white-space: nowrap;
}
.key-list label {
    display: flex;
    align-items: center;
    gap: 4px;
}
.key-list .child {
    padding-left: 65px;
}
.closed, .open {
    width: 11px;
    height: 10px;
    background: #888;
    clip-path: polygon(20% 0, 90% 50%, 20% 100%);
}
.open {
    clip-path: polygon(0 15%, 90% 15%, 45% 95%);
}
.key-list input {
    appearance: none;
    width: 12px;
    height: 12px;
    border: 1px solid #444;
    background: #fff;
}
.key-list input:checked::after {
    content: "";
    display: block;
    width: 8px;
    height: 8px;
    margin: 1px;
    background: #000;
    clip-path: polygon(0 35%, 35% 65%, 100% 0, 100% 30%, 35% 100%, 0 65%);
}
.vscroll {
    display: flex;
    flex-direction: column;
    width: 15px;
    margin: 1px 2px 0 0;
    background: #e1e1e5;
}
.vscroll button {
    flex: none;
    height: 15px;
    line-height: 8px;
    border: 1px solid #ddd;
    background: #f8f8f8;
}
.vscroll .thumb {
    flex: none;
    height: 157px;
    margin: 17px 0 15px;
    border: 1px solid #c4c4c8;
    background: #fafafa;
}
.arrow-up, .arrow-down {
    display: inline-block;
    border: 4px solid transparent;
    border-bottom-color: #888;
    border-top: none;
}
.arrow-down {
    border: 4px solid transparent;
    border-top-color: #888;
    border-bottom: none;
}
.dock-splitter {
    border-top-width: 1px;
}

/* 时间轴 */
.timeline {
    --unit: 19px;
    position: relative;
    flex: 1;
    min-width: 0;
    overflow: hidden;
    border: 2px solid #8a9db4;
    border-width: 2px 0 0 2px;
}
.ruler {
    display: flex;
    height: 34px;
    padding: 16px 0 0 11px;
    border-bottom: 3px double #8a9db4;
}
.mark {
    flex: none;
    width: calc(8 * var(--unit));
    display: flex;
    align-items: flex-start;
    font-family: "Liberation Sans", sans-serif;
    font-size: 13px;
    line-height: 16px;
    color: #000;
}
.mark span {
    flex: none;
    width: 20px;
    margin: 0 -10px;
    text-align: center;
}
.mark svg {
    width: 152px;
    height: 10px;
}
.tracks {
    padding-left: 11px;
}
.track {
    display: flex;
    align-items: center;
    width: calc(40 * var(--unit));
    height: 20px;
}
.bar {
    width: 100%;
    height: 18px;
    margin-bottom: 2px;
    border: 1px solid #1d5c78;
    background: #b8d5de;
}
.keyframes {
    flex: 1;
    display: flex;
    justify-content: space-between;
    margin: 0 -7px 2px;
}
.keyframes i {
    width: 14px;
    height: 14px;
    background: #666;
    clip-path: polygon(50% 0, 100% 50%, 50% 100%, 0 50%);
}
.span {
    flex: 1;
    height: 14px;
    margin: 0 -7px 2px;
    background: #666;
    clip-path: polygon(7px 0, calc(100% - 7px) 0, 100% 50%, calc(100% - 7px) 100%, 7px 100%, 0 50%);
}
.start {
    position: absolute;
    left: 0;
    top: 0;
}
.range {
    position: absolute;
    left: calc(40 * var(--unit) + 5px);
    top: 15px;
    width: 116px;
    display: flex;
    justify-content: space-between;
    background: linear-gradient(#b03428, #b03428) center / 104px 1px no-repeat;
}
.playhead {
    position: absolute;
    left: calc(40 * var(--unit) + 11px);
    top: 25px;
    bottom: 0;
    width: 1px;
    background: #b03428;
}
.watermark {
    position: absolute;
    right: 20px;
    bottom: 8px;
    width: 166px;
}
.brand {
    font-family: "Noto Sans CJK SC", sans-serif;
    font-size: 41px;
    font-weight: 350;
    font-style: italic;
    line-height: 44px;
    color: #000;
    white-space: nowrap;
}
.brand em {
    color: #ff6a39;
}
.watermark a {
    display: block;
    font-family: "DejaVu Sans", sans-serif;
    font-size: 15px;
    font-style: italic;
    line-height: 16px;
    color: #999;
    text-decoration: none;
}
.watermark svg {
    position: absolute;
    left: 66px;
    top: -18px;
}
```
